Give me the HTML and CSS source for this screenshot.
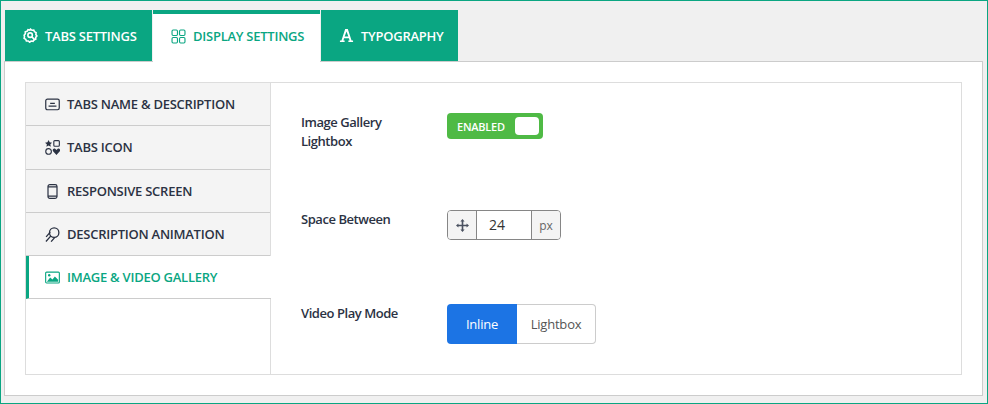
FILE: index.html
```html
<!DOCTYPE html>
<html lang="en">
<head>
<meta charset="utf-8">
<title>Display Settings</title>
<link rel="stylesheet" href="styles.css">
</head>
<body>
<div class="frame">
  <nav class="tabs">
    <a class="tab tab-one">
      <svg class="ico" viewBox="0 0 16 16" fill="none" stroke="#fff" stroke-width="1.7"><path d="M8 1.200l1.500 1.200 2-.2.7 1.800 1.800.9-.3 2 1.100 1.600-1.300 1.500.1 2-1.900.6-1 1.700-2-.4-1.600 1.200-1.500-1.300-2 .1-.7-1.900-1.700-1 .4-2L1.200 7.600l1.300-1.500-.1-2 1.900-.6 1-1.700 2 .4z"/><circle cx="7.600" cy="7.600" r="2.400"/><path d="M9.400 9.400l3.600 3.600"/></svg>
      <span>TABS SETTINGS</span>
    </a>
    <a class="tab tab-active">
      <svg class="ico" viewBox="0 0 16 16" fill="none" stroke="#0aa682" stroke-width="1.200"><rect x="1.100" y="1.100" width="5.800" height="5.800" rx="1.200"/><rect x="9.100" y="1.100" width="5.800" height="5.800" rx="1.200"/><rect x="1.100" y="9.100" width="5.800" height="5.800" rx="1.200"/><rect x="9.100" y="9.100" width="5.800" height="5.800" rx="1.200"/></svg>
      <span>DISPLAY SETTINGS</span>
    </a>
    <a class="tab tab-three">
      <svg class="ico" viewBox="0 0 16 16" fill="#fff"><path d="M6.600 1h2.800l4 12.200H15V15h-5v-1.800h1.300l-.7-2.400H5.400l-.7 2.400H6V15H1v-1.800h1.600zM8 3.800L6 9h4z"/></svg>
      <span>TYPOGRAPHY</span>
    </a>
  </nav>
  <main class="panel">
    <div class="box">
      <aside class="side">
        <a class="item">
          <svg class="ico-s" viewBox="0 0 16 16" fill="none" stroke="#2b3243" stroke-width="1.300"><rect x=".8" y="2.200" width="14.400" height="11.400" rx="1.800"/><path d="M5.500 6.800h5M3.800 9.800h8.400"/></svg>
          <span>TABS NAME &amp; DESCRIPTION</span>
        </a>
        <a class="item item-tall">
          <svg class="ico-s" viewBox="0 0 16 16"><path fill="#2b3243" d="M3.800 0l1.200 2.500 2.600.3-1.900 1.800.5 2.600-2.400-1.300-2.300 1.300.5-2.600L0 2.800l2.600-.3z"/><rect x="9.400" y=".7" width="5.900" height="5.900" rx="1" fill="none" stroke="#2b3243" stroke-width="1.200"/><circle cx="3.800" cy="12.200" r="3" fill="none" stroke="#2b3243" stroke-width="1.200"/><path fill="#2b3243" d="M12.200 16L8.600 12c-1.300-1.800 1.100-4 2.500-2.400l1.100 1 1.100-1c1.400-1.600 3.800.6 2.500 2.400z"/></svg>
          <span>TABS ICON</span>
        </a>
        <a class="item">
          <svg class="ico-s" viewBox="0 0 16 16" fill="none" stroke="#2b3243" stroke-width="1.300"><rect x="3.200" y=".7" width="9.600" height="14.600" rx="2"/><path d="M3.200 3h9.600M3.200 13h9.600"/></svg>
          <span>RESPONSIVE SCREEN</span>
        </a>
        <a class="item">
          <svg class="ico-s" viewBox="0 0 16 16" fill="none" stroke="#2b3243" stroke-width="1.400"><circle cx="9.800" cy="6" r="5"/><path d="M6.300 9.500L1 15.500M5.600 5.400L1.200 10.500M10.500 11L6.500 15.600"/></svg>
          <span>DESCRIPTION ANIMATION</span>
        </a>
        <a class="item item-active">
          <svg class="ico-s" viewBox="0 0 16 16"><rect x=".7" y="2.200" width="14.600" height="11.600" rx="1" fill="none" stroke="#0aa682" stroke-width="1.200"/><path fill="#0aa682" d="M2 12.500l3.500-4.500 2.500 2 2.500-3.200 3.500 3.700v2z"/><circle cx="4.500" cy="5.600" r="1.300" fill="#0aa682"/></svg>
          <span>IMAGE &amp; VIDEO GALLERY</span>
        </a>
      </aside>
      <section class="fields">
        <div class="row row-a">
          <label class="lbl">Image Gallery Lightbox</label>
          <div class="switch"><span>ENABLED</span><i class="knob"></i></div>
        </div>
        <div class="row row-b">
          <label class="lbl">Space Between</label>
          <div class="num">
            <span class="num-ico"><svg width="13" height="13" viewBox="0 0 16 16" fill="#4a5160"><path d="M8 0l2.600 3H9v4h4V5.400L16 8l-3 2.600V9H9v4h1.600L8 16l-2.600-3H7V9H3v1.600L0 8l3-2.600V7h4V3H5.400z"/></svg></span>
            <span class="num-val">24</span>
            <span class="num-unit">px</span>
          </div>
        </div>
        <div class="row row-c">
          <label class="lbl">Video Play Mode</label>
          <div class="seg"><span class="seg-on">Inline</span><span class="seg-off">Lightbox</span></div>
        </div>
      </section>
    </div>
  </main>
</div>
</body>
</html>
```
FILE: styles.css
```css
* { box-sizing: border-box; }
html, body { margin: 0; padding: 0; }
body { width: 988px; height: 404px; font-family: "Open Sans", "Noto Sans", sans-serif; overflow: hidden; }
.frame { width: 988px; height: 404px; background: #f0f0f0; border: 1px solid #0aa682; padding: 9px 4px 7px 3px; display: flex; flex-direction: column; }
.tabs { display: flex; height: 52px; padding-left: 1px; gap: 1px; border-bottom: 1px solid #ccc; position: relative; z-index: 1; }
.tab { height: 51px; background: #0aa682; color: #fff; font-weight: 600; font-size: 13px; letter-spacing: -.25px; display: flex; align-items: center; gap: 7px; }
.tab-one { width: 147px; padding-left: 18px; }
.tab-active { width: 167px; padding-left: 18px; background: #fff; color: #0aa682; border-top: 4px solid #0aa682; height: 52px; padding-bottom: 4px; }
.tab-three { width: 137px; padding-left: 18px; gap: 7px; }
.ico { width: 15px; height: 15px; flex: none; }
.panel { flex: 1; background: #fff; border: 1px solid #ccc; border-top: 0; padding: 20px 20px 20px; }
.box { height: 293px; border: 1px solid #ddd; display: flex; }
.side { width: 245px; border-right: 1px solid #ddd; display: flex; flex-direction: column; }
.item { height: 43px; background: #f4f4f4; border-bottom: 1px solid #ccc; color: #2b3243; font-size: 13px; font-weight: 600; letter-spacing: -.25px; display: flex; align-items: center; gap: 7px; padding-left: 19px; }
.item-tall { height: 44px; padding-bottom: 1px; }
.ico-s { width: 15px; height: 15px; flex: none; }
.item-active { background: #fff; color: #0aa682; border-left: 3px solid #0aa682; padding-left: 16px; margin-right: -1px; }
.fields { flex: 1; padding: 30px 0 0 30px; display: flex; flex-direction: column; }
.row { display: flex; align-items: flex-start; }
.row-a { height: 97px; }
.row-b { height: 94px; }
.lbl { width: 146px; font-size: 13px; font-weight: 600; color: #2b3243; line-height: 18.6px; letter-spacing: -.45px; flex: none; }
.row-a .lbl { padding-right: 50px; }
.switch { width: 96px; height: 26px; background: #4fba45; border-radius: 4px; color: #fff; font-size: 11px; font-weight: 600; letter-spacing: -.25px; display: flex; align-items: center; justify-content: space-between; padding: 0 4px 0 10px; }
.knob { width: 24px; height: 18px; background: #fff; border-radius: 4px; }
.num { display: flex; height: 30px; border: 1px solid #868686; border-radius: 4px; font-size: 14px; color: #333; }
.num-ico { width: 29px; background: #f4f4f4; border-right: 1px solid #868686; border-radius: 3px 0 0 3px; display: flex; align-items: center; justify-content: center; }
.num-val { width: 54px; padding-left: 12px; line-height: 28px; }
.num-unit { width: 29px; background: #f4f4f4; border-left: 1px solid #868686; border-radius: 0 3px 3px 0; font-size: 12px; color: #666; display: flex; align-items: center; justify-content: center; }
.seg { display: flex; height: 40px; border-radius: 4px; font-size: 13px; letter-spacing: -.2px; }
.seg-on { width: 70px; background: #1c74e4; color: #fff; border-radius: 4px 0 0 4px; display: flex; align-items: center; justify-content: center; }
.seg-off { width: 79px; background: #fff; color: #555; border: 1px solid #ccc; border-left: 0; border-radius: 0 4px 4px 0; display: flex; align-items: center; justify-content: center; }
```
